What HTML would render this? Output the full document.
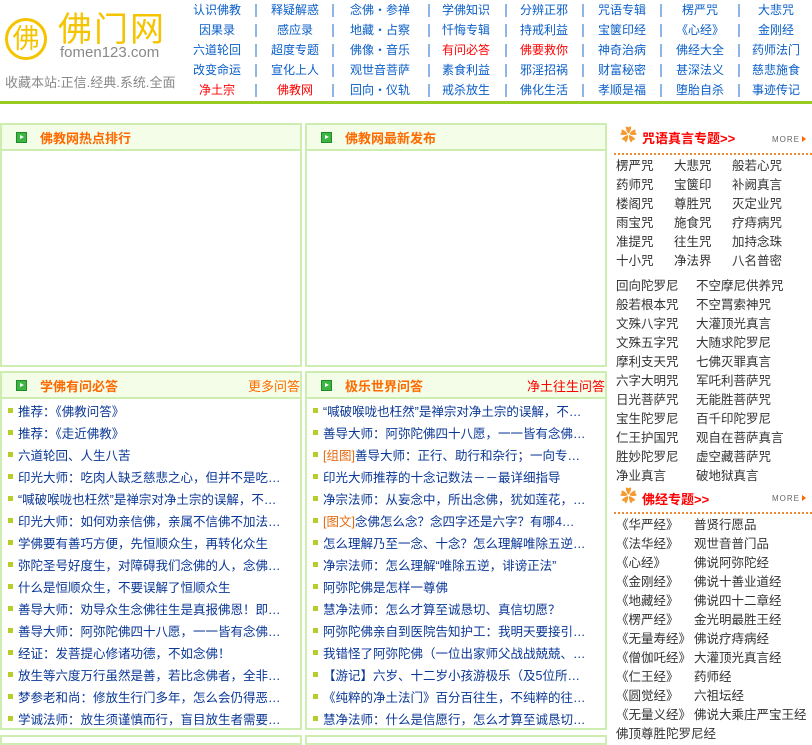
<!DOCTYPE html>
<html><head><meta charset="utf-8">
<style>
*{margin:0;padding:0;box-sizing:border-box}
body{width:812px;height:738px;overflow:hidden;background:#fff;font-family:"Liberation Sans","Noto Sans CJK SC",sans-serif;font-size:12px;position:relative}
.a{position:absolute;white-space:nowrap}
.nav{position:absolute;left:176px;top:0;width:636px}
.nav div{position:absolute;color:#0a5fc8;font-size:12px;text-align:center;width:80px;line-height:20px}
.nav .r{color:#f00}
.sep{position:absolute;width:2px;height:13px;background:#8fb4e6}
.box{position:absolute;border:2px solid #cdeeb0;background:#fff}
.bh{position:absolute;left:0;right:0;top:0;height:26px;background:#f3fde8;border-bottom:2px solid #cdeeb0}
.ic{position:absolute;left:14px;top:7px;width:11px;height:11px;background:#3cb544;border:1px solid #1e8a28}
.ic:after{content:"";position:absolute;left:3px;top:2px;border-left:4px solid #fff;border-top:2.5px solid transparent;border-bottom:2.5px solid transparent}
.bt{position:absolute;left:38px;top:3px;color:#ff6a00;font-weight:bold;font-size:13px}
.more{position:absolute;right:0;top:3px;font-size:13px}
.li{position:absolute;left:6px;color:#0a3796;font-size:12.5px;white-space:nowrap}
.li:before{content:"";display:inline-block;width:5px;height:5px;background:#b8cc2a;margin-right:5px;vertical-align:middle;position:relative;top:-2px}
.o{color:#e86a10}
.rc{position:absolute;color:#333;font-size:12.5px;white-space:nowrap}
.rh{position:absolute;left:616px;color:#f00;font-weight:bold;font-size:13px}
.rm{position:absolute;left:772px;font-size:8px;color:#666;letter-spacing:1px}
.rm:after{content:"";display:inline-block;border-left:4px solid #f60;border-top:3px solid transparent;border-bottom:3px solid transparent;margin-left:2px}
.dot{position:absolute;left:614px;width:198px;border-top:2px dotted #f08a30}
</style></head><body>
<div class="a" style="left:5px;top:18px;width:42px;height:42px;border:3px solid #f5c400;border-radius:50%;color:#f5c400;font-size:27px;line-height:36px;text-align:center">佛</div>
<div class="a" style="left:58px;top:10px;color:#f5c400;font-size:34px;letter-spacing:2px;line-height:40px">佛门网</div>
<div class="a" style="left:60px;top:44px;color:#888;font-size:15px">fomen123.com</div>
<div class="a" style="left:5px;top:72px;color:#888;font-size:13px">收藏本站:正信.经典.系统.全面</div>
<div class="a" style="left:0;top:101px;width:812px;height:3px;background:#99cc22"></div>
<div class="nav">
<div style="left:1px;top:0">认识佛教</div><div style="left:79px;top:0">释疑解惑</div><div style="left:164px;top:0">念佛・参禅</div><div style="left:250px;top:0">学佛知识</div><div style="left:328px;top:0">分辨正邪</div><div style="left:406px;top:0">咒语专辑</div><div style="left:484px;top:0">楞严咒</div><div style="left:560px;top:0">大悲咒</div>
<div style="left:1px;top:20px">因果录</div><div style="left:79px;top:20px">感应录</div><div style="left:164px;top:20px">地藏・占察</div><div style="left:250px;top:20px">忏悔专辑</div><div style="left:328px;top:20px">持戒利益</div><div style="left:406px;top:20px">宝箧印经</div><div style="left:484px;top:20px">《心经》</div><div style="left:560px;top:20px">金刚经</div>
<div style="left:1px;top:40px">六道轮回</div><div style="left:79px;top:40px">超度专题</div><div style="left:164px;top:40px">佛像・音乐</div><div class="r" style="left:250px;top:40px">有问必答</div><div class="r" style="left:328px;top:40px">佛要救你</div><div style="left:406px;top:40px">神奇治病</div><div style="left:484px;top:40px">佛经大全</div><div style="left:560px;top:40px">药师法门</div>
<div style="left:1px;top:60px">改变命运</div><div style="left:79px;top:60px">宣化上人</div><div style="left:164px;top:60px">观世音菩萨</div><div style="left:250px;top:60px">素食利益</div><div style="left:328px;top:60px">邪淫招祸</div><div style="left:406px;top:60px">财富秘密</div><div style="left:484px;top:60px">甚深法义</div><div style="left:560px;top:60px">慈悲施食</div>
<div class="r" style="left:1px;top:80px">净土宗</div><div class="r" style="left:79px;top:80px">佛教网</div><div style="left:164px;top:80px">回向・仪轨</div><div style="left:250px;top:80px">戒杀放生</div><div style="left:328px;top:80px">佛化生活</div><div style="left:406px;top:80px">孝顺是福</div><div style="left:484px;top:80px">堕胎自杀</div><div style="left:560px;top:80px">事迹传记</div>
</div>
<div id="seps"></div>
<script>
var xs=[255,332,428,505,582,660,738],h='';
for(var i=0;i<xs.length;i++)for(var r=0;r<5;r++)h+='<div class="sep" style="left:'+xs[i]+'px;top:'+(4+r*20)+'px"></div>';
document.getElementById('seps').innerHTML=h;
</script>
<div class="box" style="left:0;top:123px;width:302px;height:244px"><div class="bh"><div class="ic"></div><div class="bt">佛教网热点排行</div></div></div>
<div class="box" style="left:305px;top:123px;width:302px;height:244px"><div class="bh"><div class="ic"></div><div class="bt">佛教网最新发布</div></div></div>
<div class="box" style="left:0;top:371px;width:302px;height:359px"><div class="bh"><div class="ic"></div><div class="bt">学佛有问必答</div><div class="more" style="color:#ff6a00">更多问答</div></div>
<div class="li" style="top:28px">推荐：《佛教问答》</div>
<div class="li" style="top:50px">推荐：《走近佛教》</div>
<div class="li" style="top:72px">六道轮回、人生八苦</div>
<div class="li" style="top:94px">印光大师：吃肉人缺乏慈悲之心，但并不是吃…</div>
<div class="li" style="top:116px">“喊破喉咙也枉然”是禅宗对净土宗的误解，不…</div>
<div class="li" style="top:138px">印光大师：如何劝亲信佛，亲属不信佛不加法…</div>
<div class="li" style="top:160px">学佛要有善巧方便，先恒顺众生，再转化众生</div>
<div class="li" style="top:182px">弥陀圣号好度生，对障碍我们念佛的人，念佛…</div>
<div class="li" style="top:204px">什么是恒顺众生，不要误解了恒顺众生</div>
<div class="li" style="top:226px">善导大师：劝导众生念佛往生是真报佛恩！即…</div>
<div class="li" style="top:248px">善导大师：阿弥陀佛四十八愿，一一皆有念佛…</div>
<div class="li" style="top:270px">经证：发菩提心修诸功德，不如念佛！</div>
<div class="li" style="top:292px">放生等六度万行虽然是善，若比念佛者，全非…</div>
<div class="li" style="top:314px">梦参老和尚：修放生行门多年，怎么会仍得恶…</div>
<div class="li" style="top:336px">学诚法师：放生须谨慎而行，盲目放生者需要…</div>
</div>
<div class="box" style="left:305px;top:371px;width:302px;height:359px"><div class="bh"><div class="ic"></div><div class="bt">极乐世界问答</div><div class="more" style="color:#f00">净土往生问答</div></div>
<div class="li" style="top:28px">“喊破喉咙也枉然”是禅宗对净土宗的误解，不…</div>
<div class="li" style="top:50px">善导大师：阿弥陀佛四十八愿，一一皆有念佛…</div>
<div class="li" style="top:72px"><span class="o">[组图]</span>善导大师：正行、助行和杂行；一向专…</div>
<div class="li" style="top:94px">印光大师推荐的十念记数法－－最详细指导</div>
<div class="li" style="top:116px">净宗法师：从妄念中，所出念佛，犹如莲花，…</div>
<div class="li" style="top:138px"><span class="o">[图文]</span>念佛怎么念？念四字还是六字？有哪4…</div>
<div class="li" style="top:160px">怎么理解乃至一念、十念？怎么理解唯除五逆…</div>
<div class="li" style="top:182px">净宗法师：怎么理解“唯除五逆，诽谤正法”</div>
<div class="li" style="top:204px">阿弥陀佛是怎样一尊佛</div>
<div class="li" style="top:226px">慧净法师：怎么才算至诚恳切、真信切愿？</div>
<div class="li" style="top:248px">阿弥陀佛亲自到医院告知护工：我明天要接引…</div>
<div class="li" style="top:270px">我错怪了阿弥陀佛（一位出家师父战战兢兢、…</div>
<div class="li" style="top:292px">【游记】六岁、十二岁小孩游极乐（及5位所…</div>
<div class="li" style="top:314px">《纯粹的净土法门》百分百往生，不纯粹的往…</div>
<div class="li" style="top:336px">慧净法师：什么是信愿行，怎么才算至诚恳切…</div>
</div>
<div class="box" style="left:0;top:735px;width:302px;height:10px"></div>
<div class="box" style="left:305px;top:735px;width:302px;height:10px"></div>
<div class="a" style="left:620px;top:127px;color:#f39a30;font-size:17px;line-height:18px">✿</div>
<div class="rh" style="left:642px;top:128px">咒语真言专题&gt;&gt;</div>
<div class="rm" style="top:135px">MORE</div>
<div class="dot" style="top:153px"></div>
<div id="rc"></div>
<div class="a" style="left:620px;top:488px;color:#f39a30;font-size:17px;line-height:18px">✿</div>
<div class="rh" style="left:642px;top:489px">佛经专题&gt;&gt;</div>
<div class="rm" style="top:494px">MORE</div>
<div class="dot" style="top:512px"></div>
<script>
var g=[["楞严咒","大悲咒","般若心咒"],["药师咒","宝箧印","补阙真言"],["楼阁咒","尊胜咒","灭定业咒"],["雨宝咒","施食咒","疗痔病咒"],["准提咒","往生咒","加持念珠"],["十小咒","净法界","八名普密"]];
var h='';
for(var r=0;r<g.length;r++)for(var c=0;c<3;c++)h+='<div class="rc" style="left:'+(616+c*58)+'px;top:'+(155+r*19)+'px">'+g[r][c]+'</div>';
var g2=[["回向陀罗尼","不空摩尼供养咒"],["般若根本咒","不空罥索神咒"],["文殊八字咒","大灌顶光真言"],["文殊五字咒","大随求陀罗尼"],["摩利支天咒","七佛灭罪真言"],["六字大明咒","军吒利菩萨咒"],["日光菩萨咒","无能胜菩萨咒"],["宝生陀罗尼","百千印陀罗尼"],["仁王护国咒","观自在菩萨真言"],["胜妙陀罗尼","虚空藏菩萨咒"],["净业真言","破地狱真言"]];
for(var r=0;r<g2.length;r++)for(var c=0;c<2;c++)h+='<div class="rc" style="left:'+(616+c*80)+'px;top:'+(275+r*19)+'px">'+g2[r][c]+'</div>';
var g3=[["《华严经》","普贤行愿品"],["《法华经》","观世音普门品"],["《心经》","佛说阿弥陀经"],["《金刚经》","佛说十善业道经"],["《地藏经》","佛说四十二章经"],["《楞严经》","金光明最胜王经"],["《无量寿经》","佛说疗痔病经"],["《僧伽吒经》","大灌顶光真言经"],["《仁王经》","药师经"],["《圆觉经》","六祖坛经"],["《无量义经》","佛说大乘庄严宝王经"],["佛顶尊胜陀罗尼经",""]];
for(var r=0;r<g3.length;r++)for(var c=0;c<2;c++)h+='<div class="rc" style="left:'+(616+c*78)+'px;top:'+(514+r*19)+'px">'+g3[r][c]+'</div>';
document.getElementById('rc').innerHTML=h;
</script>
</body></html>
